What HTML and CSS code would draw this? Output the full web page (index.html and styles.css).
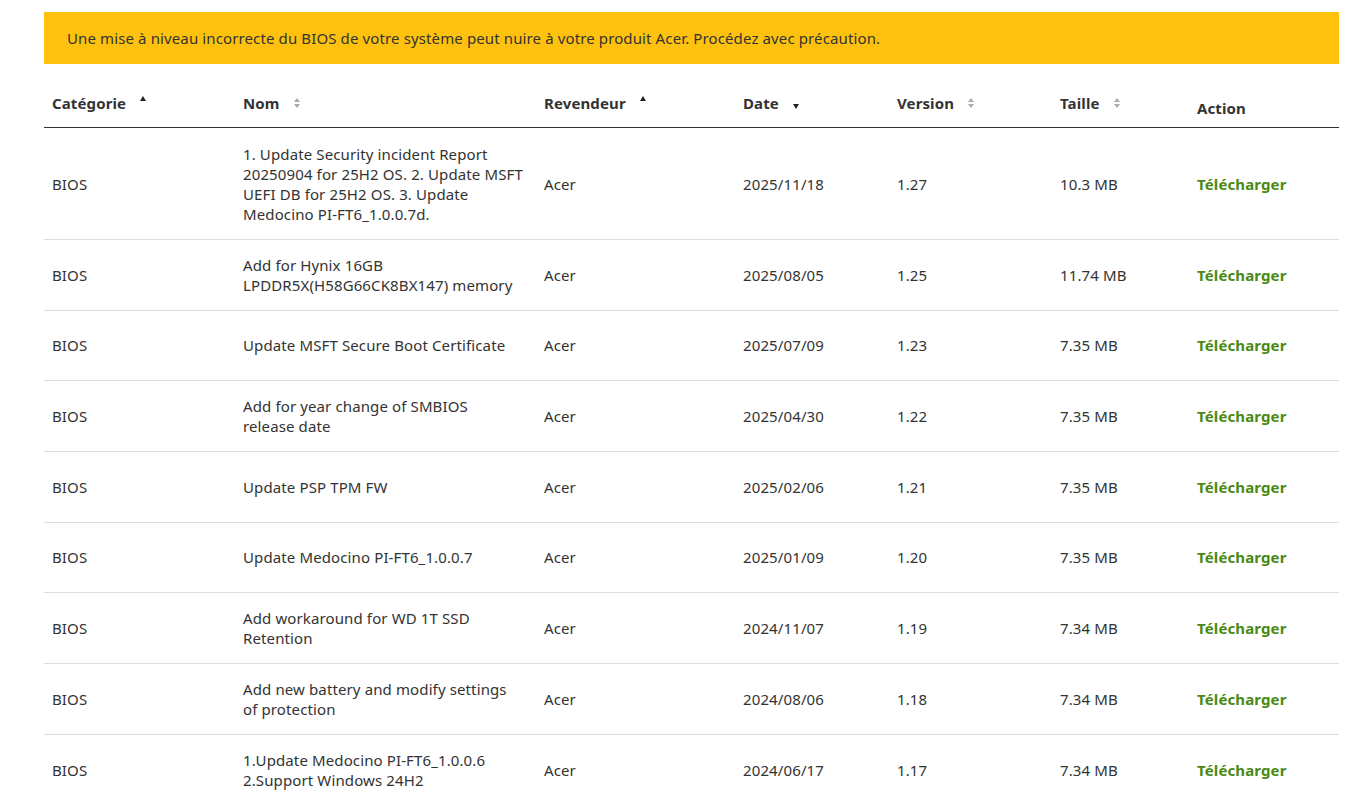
FILE: index.html
```html
<!DOCTYPE html>
<html lang="fr">
<head>
<meta charset="utf-8">
<title>BIOS</title>
<link rel="stylesheet" href="styles.css">
</head>
<body>
<div class="page">
  <div class="warning">Une mise à niveau incorrecte du BIOS de votre système peut nuire à votre produit Acer. Procédez avec précaution.</div>
  <table class="downloads">
    <colgroup>
      <col class="c-cat"><col class="c-nom"><col class="c-rev"><col class="c-date"><col class="c-ver"><col class="c-size"><col class="c-act">
    </colgroup>
    <thead>
      <tr>
        <th><span class="sortable">Catégorie <span class="sort up"></span></span></th>
        <th><span class="sortable">Nom <span class="sort both"><i class="u"></i><i class="d"></i></span></span></th>
        <th><span class="sortable">Revendeur <span class="sort up"></span></span></th>
        <th><span class="sortable">Date <span class="sort down"></span></span></th>
        <th><span class="sortable">Version <span class="sort both"><i class="u"></i><i class="d"></i></span></span></th>
        <th><span class="sortable">Taille <span class="sort both"><i class="u"></i><i class="d"></i></span></span></th>
        <th>Action</th>
      </tr>
    </thead>
    <tbody>
      <tr><td>BIOS</td><td class="name">1. Update Security incident Report 20250904 for 25H2 OS. 2. Update MSFT UEFI DB for 25H2 OS. 3. Update Medocino PI-FT6_1.0.0.7d.</td><td>Acer</td><td>2025/11/18</td><td>1.27</td><td>10.3 MB</td><td><a class="dl" href="#">Télécharger</a></td></tr>
      <tr><td>BIOS</td><td class="name">Add for Hynix 16GB LPDDR5X(H58G66CK8BX147) memory</td><td>Acer</td><td>2025/08/05</td><td>1.25</td><td>11.74 MB</td><td><a class="dl" href="#">Télécharger</a></td></tr>
      <tr><td>BIOS</td><td class="name">Update MSFT Secure Boot Certificate</td><td>Acer</td><td>2025/07/09</td><td>1.23</td><td>7.35 MB</td><td><a class="dl" href="#">Télécharger</a></td></tr>
      <tr><td>BIOS</td><td class="name">Add for year change of SMBIOS<br>release date</td><td>Acer</td><td>2025/04/30</td><td>1.22</td><td>7.35 MB</td><td><a class="dl" href="#">Télécharger</a></td></tr>
      <tr><td>BIOS</td><td class="name">Update PSP TPM FW</td><td>Acer</td><td>2025/02/06</td><td>1.21</td><td>7.35 MB</td><td><a class="dl" href="#">Télécharger</a></td></tr>
      <tr><td>BIOS</td><td class="name">Update Medocino PI-FT6_1.0.0.7</td><td>Acer</td><td>2025/01/09</td><td>1.20</td><td>7.35 MB</td><td><a class="dl" href="#">Télécharger</a></td></tr>
      <tr><td>BIOS</td><td class="name">Add workaround for WD 1T SSD Retention</td><td>Acer</td><td>2024/11/07</td><td>1.19</td><td>7.34 MB</td><td><a class="dl" href="#">Télécharger</a></td></tr>
      <tr><td>BIOS</td><td class="name">Add new battery and modify settings of protection</td><td>Acer</td><td>2024/08/06</td><td>1.18</td><td>7.34 MB</td><td><a class="dl" href="#">Télécharger</a></td></tr>
      <tr><td>BIOS</td><td class="name">1.Update Medocino PI-FT6_1.0.0.6 2.Support Windows 24H2</td><td>Acer</td><td>2024/06/17</td><td>1.17</td><td>7.34 MB</td><td><a class="dl" href="#">Télécharger</a></td></tr>
    </tbody>
  </table>
</div>
</body>
</html>
```

FILE: styles.css
```css
html, body {
  margin: 0;
  padding: 0;
  background: #ffffff;
}
body {
  font-family: "Noto Sans", "Open Sans", "DejaVu Sans", sans-serif;
  font-size: 15px;
  line-height: 20px;
  letter-spacing: 0.12px;
  color: #333333;
  overflow: hidden;
}
.page {
  width: 1295px;
  padding: 12px 0 0 44px;
}
.warning {
  background: #fec20e;
  color: #333333;
  height: 52px;
  padding: 0 23px;
  display: flex;
  align-items: center;
  box-sizing: border-box;
}
.downloads {
  width: 1295px;
  border-collapse: collapse;
  table-layout: fixed;
  margin-top: 0;
}
.c-cat { width: 191px; }
.c-nom { width: 301px; }
.c-rev { width: 199px; }
.c-date { width: 154px; }
.c-ver { width: 163px; }
.c-size { width: 137px; }
.c-act { width: 150px; }

.downloads th {
  text-align: left;
  font-weight: 700;
  color: #333333;
  vertical-align: bottom;
  height: 63px;
  padding: 0 8px 9px;
  box-sizing: border-box;
  border-bottom: 1px solid #333333;
}
.sortable {
  display: inline-flex;
  align-items: center;
  padding-bottom: 5px;
}
.sort {
  display: inline-block;
  margin-left: 14px;
}
.sort.up {
  width: 0;
  height: 0;
  border-left: 3.5px solid transparent;
  border-right: 3.5px solid transparent;
  border-bottom: 5px solid #222222;
  align-self: flex-start;
  margin-top: 3px;
}
.sort.down {
  width: 0;
  height: 0;
  border-left: 3.5px solid transparent;
  border-right: 3.5px solid transparent;
  border-top: 5px solid #222222;
  margin-top: 7px;
}
.sort.both {
  display: inline-flex;
  flex-direction: column;
  gap: 2px;
}
.sort.both i {
  display: block;
  width: 0;
  height: 0;
  border-left: 3.5px solid transparent;
  border-right: 3.5px solid transparent;
}
.sort.both .u { border-bottom: 4.5px solid #aaaaaa; }
.sort.both .d { border-top: 4.5px solid #aaaaaa; }

.downloads td {
  padding: 15px 8px;
  height: 39.6px;
  vertical-align: middle;
  border-bottom: 1px solid #dddddd;
  color: #333333;
}
.downloads td.name {
  padding-right: 12px;
}
.downloads tbody tr:first-child td {
  padding-top: 16px;
  padding-bottom: 15px;
}
.dl {
  color: #4b8a12;
  font-weight: 700;
  text-decoration: none;
}
```
